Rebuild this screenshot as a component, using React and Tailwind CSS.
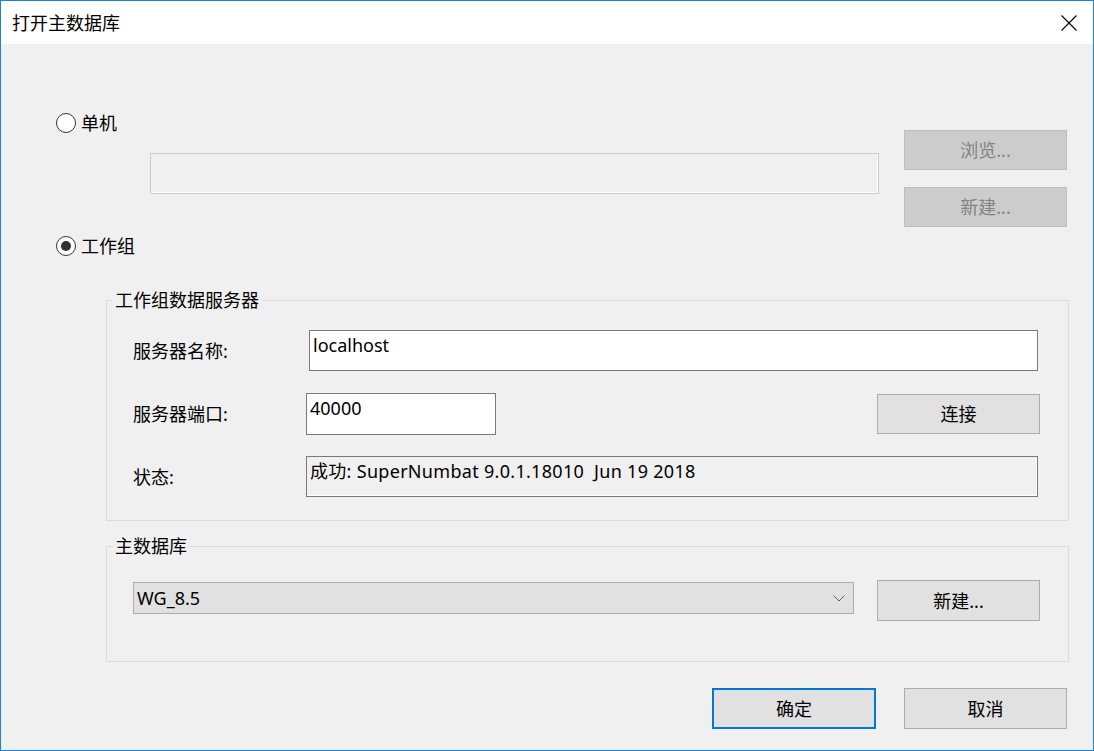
import React from "react";

const FONT = "font-['Noto_Sans','Noto_Sans_CJK_SC',sans-serif]";

function Radio({ checked, label }) {
  return (
    <div className="flex items-center h-[20px]">
      <div className="w-[20px] h-[20px] rounded-full border border-[#333333] bg-white flex items-center justify-center">
        {checked && <div className="w-[10px] h-[10px] rounded-full bg-[#333333]" />}
      </div>
      <span className="ml-[5px] text-[18px] leading-[20px] text-black">{label}</span>
    </div>
  );
}

function Btn({ children, disabled, primary, className = "" }) {
  const base = "flex items-center justify-center text-[18px] leading-none";
  const style = disabled
    ? "bg-[#cccccc] border border-[#bfbfbf] text-[#838383]"
    : primary
    ? "bg-[#e1e1e1] border-2 border-[#0078d7] text-black"
    : "bg-[#e1e1e1] border border-[#adadad] text-black";
  return <div className={`${base} ${style} ${className}`}>{children}</div>;
}

function Group({ label, className = "", children }) {
  return (
    <div className={`relative border border-[#dcdcdc] ${className}`}>
      <span className="absolute left-[6px] top-[-13px] px-[2px] bg-[#f0f0f0] text-[18px] leading-[24px] text-black">
        {label}
      </span>
      {children}
    </div>
  );
}

export default function App() {
  return (
    <div className={`${FONT} w-[1094px] h-[751px] border border-[#1883d7] bg-[#f0f0f0] flex flex-col text-black`}>
      {/* Title bar */}
      <div className="h-[43px] bg-white flex items-center justify-between pl-[11px] pr-[16px] shrink-0">
        <span className="text-[18px] leading-[24px]">打开主数据库</span>
        <svg width="16" height="16" viewBox="0 0 16 16" className="mt-[1px]">
          <path d="M0.5 0.5 L15.5 15.5 M15.5 0.5 L0.5 15.5" stroke="#000" strokeWidth="1.1" fill="none" />
        </svg>
      </div>

      {/* Top section */}
      <div className="flex">
        <div className="w-[878px] flex flex-col">
          <div className="mt-[69px] pl-[55px]">
            <Radio label="单机" />
          </div>
          <div className="mt-[20px] ml-[149px] w-[729px] h-[41px] border border-[#cccccc] bg-[#f0f0f0] shadow-[inset_-1px_-1px_0_#ffffff]" />
          <div className="mt-[42px] pl-[55px]">
            <Radio checked label="工作组" />
          </div>
        </div>
        <div className="ml-[25px] w-[163px] pt-[86px] flex flex-col gap-[17px]">
          <Btn disabled className="h-[40px]">浏览...</Btn>
          <Btn disabled className="h-[40px]">新建...</Btn>
        </div>
      </div>

      {/* Workgroup server group */}
      <Group label="工作组数据服务器" className="mt-[44px] ml-[105px] w-[963px] h-[221px] shrink-0">
        <div className="flex flex-col pl-[26px]">
          <div className="flex items-center mt-[29px]">
            <span className="w-[176px] text-[18px] leading-[24px]">服务器名称:</span>
            <div className="w-[729px] h-[41px] bg-white border border-[#7a7a7a] pl-[3px] pt-[2px] text-[18px] leading-[24px]">
              localhost
            </div>
          </div>
          <div className="flex items-center mt-[22px]">
            <span className="w-[173px] text-[18px] leading-[24px]">服务器端口:</span>
            <div className="w-[190px] h-[42px] bg-white border border-[#7a7a7a] pl-[3px] pt-[2px] text-[18px] leading-[24px]">
              40000
            </div>
            <Btn className="ml-[381px] w-[163px] h-[40px]">连接</Btn>
          </div>
          <div className="flex items-center mt-[21px]">
            <span className="w-[173px] text-[18px] leading-[24px]">状态:</span>
            <div className="w-[732px] h-[41px] bg-[#f0f0f0] border border-[#7a7a7a] shadow-[inset_-1px_-1px_0_#ffffff] pl-[3px] pt-[2px] text-[18px] leading-[24px] tracking-[0.3px] whitespace-pre">
              {"成功: SuperNumbat 9.0.1.18010  Jun 19 2018"}
            </div>
          </div>
        </div>
      </Group>

      {/* Master database group */}
      <Group label="主数据库" className="mt-[25px] ml-[105px] w-[963px] h-[116px] shrink-0">
        <div className="flex items-start pl-[26px]">
          <div className="mt-[35px] w-[721px] h-[32px] bg-[#e1e1e1] border border-[#adadad] flex items-center justify-between pl-[3px] pr-[8px]">
            <span className="text-[18px] leading-[24px]">WG_8.5</span>
            <svg width="12" height="7" viewBox="0 0 12 7">
              <path d="M0.5 0.5 L6 6 L11.5 0.5" stroke="#606060" strokeWidth="1" fill="none" />
            </svg>
          </div>
          <Btn className="mt-[33px] ml-[23px] w-[163px] h-[41px]">新建...</Btn>
        </div>
      </Group>

      {/* Bottom buttons */}
      <div className="flex mt-[26px] pl-[711px] gap-[28px]">
        <Btn primary className="w-[164px] h-[41px]">确定</Btn>
        <Btn className="w-[163px] h-[41px]">取消</Btn>
      </div>
    </div>
  );
}
